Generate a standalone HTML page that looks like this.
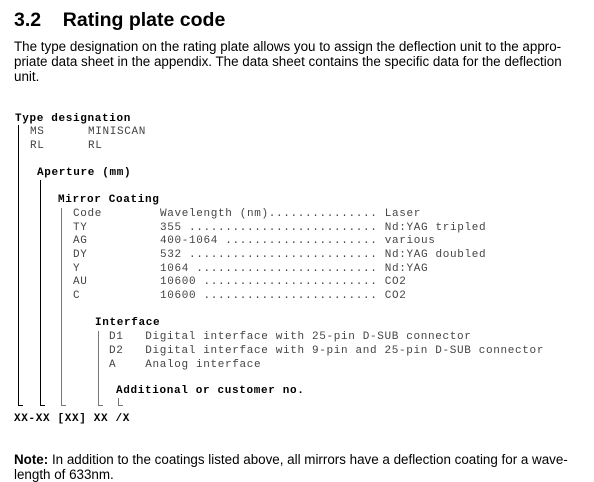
<!DOCTYPE html>
<html><head><style>
body{margin:0;width:594px;height:481px;background:#fff;position:relative;font-family:"Liberation Sans",sans-serif;color:#000;overflow:hidden}
.a{position:absolute;white-space:pre;line-height:1}
.m{font-family:"Liberation Mono",monospace;font-size:11px;letter-spacing:0.65px;color:#444}
.b{font-weight:bold;color:#000}
.v{position:absolute;width:1px}
.t{position:absolute;height:1px;width:5px}
.p{position:absolute;font-size:13.4px;line-height:15px;white-space:nowrap}
</style></head><body>
<div class="a" style="left:14px;top:11px;font-size:19.5px;font-weight:bold">3.2&nbsp;&nbsp;&nbsp;&nbsp;Rating plate code</div>
<div class="p" style="left:14px;top:39px">The type designation on the rating plate allows you to assign the deflection unit to the appro-<br>priate data sheet in the appendix. The data sheet contains the specific data for the deflection<br>unit.</div>

<div class="a m b" style="left:15px;top:114px">Type designation</div>
<div class="a m" style="left:30px;top:127px">MS      MINISCAN</div>
<div class="a m" style="left:30px;top:141px">RL      RL</div>
<div class="a m b" style="left:37px;top:168px">Aperture (mm)</div>
<div class="a m b" style="left:58px;top:195px">Mirror Coating</div>
<div class="a m" style="left:73px;top:209px">Code        Wavelength (nm)............... Laser</div>
<div class="a m" style="left:73px;top:223px">TY          355 .......................... Nd:YAG tripled</div>
<div class="a m" style="left:73px;top:236px">AG          400-1064 ..................... various</div>
<div class="a m" style="left:73px;top:250px">DY          532 .......................... Nd:YAG doubled</div>
<div class="a m" style="left:73px;top:264px">Y           1064 ......................... Nd:YAG</div>
<div class="a m" style="left:73px;top:277px">AU          10600 ........................ CO2</div>
<div class="a m" style="left:73px;top:291px">C           10600 ........................ CO2</div>
<div class="a m b" style="left:95px;top:318px">Interface</div>
<div class="a m" style="left:109px;top:332px">D1   Digital interface with 25-pin D-SUB connector</div>
<div class="a m" style="left:109px;top:346px">D2   Digital interface with 9-pin and 25-pin D-SUB connector</div>
<div class="a m" style="left:109px;top:360px">A    Analog interface</div>
<div class="a m b" style="left:116px;top:386px">Additional or customer no.</div>
<div class="a m b" style="left:14px;top:414px">XX-XX [XX] XX /X</div>

<div class="v" style="left:18px;top:125px;height:280px;background:#000"></div>
<div class="v" style="left:40px;top:180px;height:225px;background:#000"></div>
<div class="v" style="left:61px;top:208px;height:197px;background:#777"></div>
<div class="v" style="left:98px;top:331px;height:74px;background:#777"></div>
<div class="v" style="left:118px;top:398px;height:7px;background:#777"></div>
<div class="t" style="left:18px;top:405px;background:#000"></div>
<div class="t" style="left:40px;top:405px;background:#000"></div>
<div class="t" style="left:61px;top:405px;background:#777"></div>
<div class="t" style="left:98px;top:405px;background:#777"></div>
<div class="t" style="left:118px;top:405px;background:#777"></div>

<div class="p" style="left:14px;top:452px"><b>Note:</b> In addition to the coatings listed above, all mirrors have a deflection coating for a wave-<br>length of 633nm.</div>
</body></html>
